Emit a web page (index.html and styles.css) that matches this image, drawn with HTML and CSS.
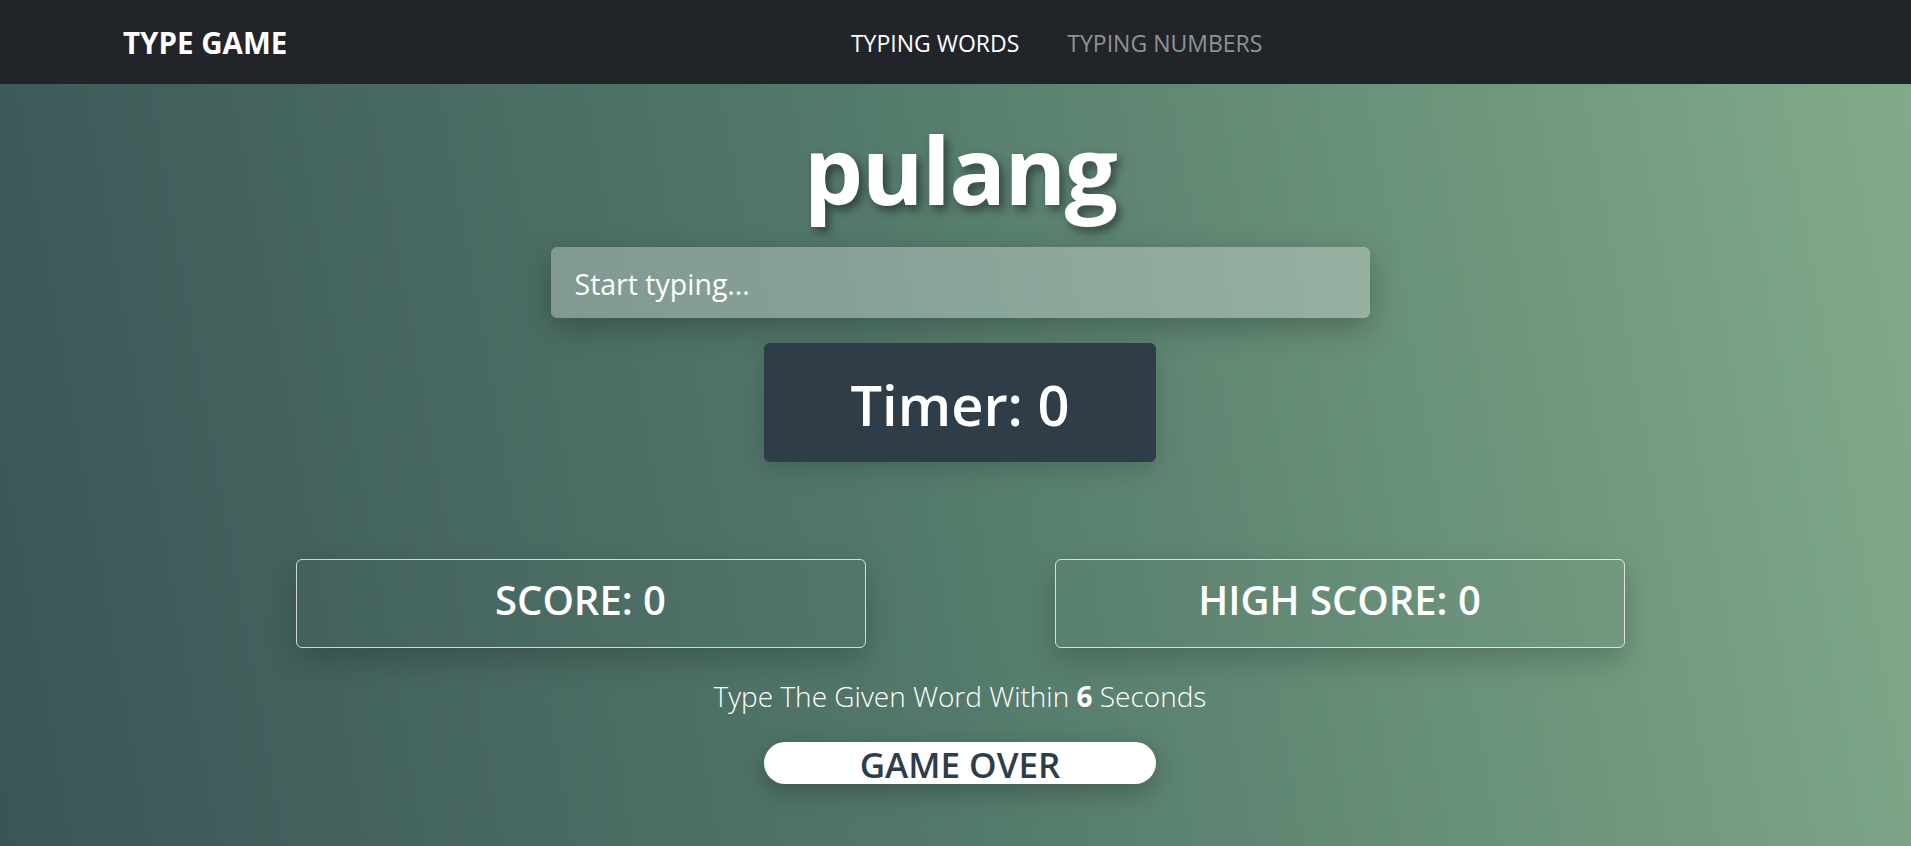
FILE: index.html
```html
<!DOCTYPE html>
<html lang="en">
<head>
<meta charset="utf-8">
<title>Type Game</title>
<link rel="stylesheet" href="styles.css">
</head>
<body>
<nav class="navbar">
  <div class="nav-container">
    <a class="brand" href="#">TYPE GAME</a>
    <ul class="nav-links">
      <li class="nav-item active"><a href="#">TYPING WORDS</a></li>
      <li class="nav-item"><a href="#">TYPING NUMBERS</a></li>
    </ul>
  </div>
</nav>
<main class="game">
  <h1 class="word">pulang</h1>
  <input class="type-input" type="text" placeholder="Start typing...">
  <div class="timer">Timer: 0</div>
  <div class="scores">
    <div class="score-box">SCORE: 0</div>
    <div class="score-box">HIGH SCORE: 0</div>
  </div>
  <p class="hint">Type The Given Word Within <strong>6</strong> Seconds</p>
  <button class="game-over" type="button">GAME OVER</button>
</main>
</body>
</html>
```
FILE: styles.css
```css
* { box-sizing: border-box; }

html, body {
  margin: 0;
  padding: 0;
}

body {
  font-family: "Open Sans", "Noto Sans", sans-serif;
  color: #fff;
  min-height: 846px;
  background: linear-gradient(80deg, #3a5556 0%, #547a6b 48%, #83ab8a 100%);
  overflow: hidden;
}

.navbar {
  background: #212529;
  height: 84px;
}

.nav-container {
  max-width: 1710px;
  margin: 0 auto;
  padding: 0 22.5px;
  height: 100%;
  display: flex;
  align-items: center;
}

.brand {
  color: #fff;
  text-decoration: none;
  font-weight: 700;
  font-size: 29.5px;
  margin-right: 24px;
}

.nav-links {
  list-style: none;
  margin: 0 auto;
  padding: 0 0 0 14px;
  display: flex;
}

.nav-item a {
  display: block;
  padding: 2px 24px 0;
  font-size: 23px;
  color: rgba(255, 255, 255, 0.5);
  text-decoration: none;
}

.nav-item.active a { color: #fff; }

.game {
  display: flex;
  flex-direction: column;
  align-items: center;
  padding-left: 9px;
}

.word {
  margin: 28px 0 0;
  font-size: 94px;
  line-height: 115px;
  font-weight: 700;
  letter-spacing: -1.5px;
  text-shadow: 4px 5px 10px rgba(0, 0, 0, 0.45);
}

.type-input {
  margin-top: 20px;
  width: 819px;
  height: 71px;
  padding: 2px 23px 0;
  font-family: inherit;
  font-size: 28.5px;
  color: #fff;
  background: rgba(255, 255, 255, 0.3);
  border: 1px solid transparent;
  border-radius: 6px;
  box-shadow: 0 10px 30px rgba(0, 0, 0, 0.25);
  outline: none;
}

.type-input::placeholder { color: #fff; opacity: 1; }

.timer {
  margin-top: 25px;
  width: 392px;
  height: 119px;
  background: #2e3d48;
  border-radius: 6px;
  display: flex;
  align-items: center;
  justify-content: center;
  padding-top: 2px;
  font-size: 56px;
  font-weight: 600;
  box-shadow: 0 8px 25px rgba(0, 0, 0, 0.15);
}

.scores {
  margin-top: 97px;
  width: 1329px;
  display: flex;
  justify-content: space-between;
}

.score-box {
  width: 570px;
  height: 89px;
  border: 1px solid rgba(255, 255, 255, 0.75);
  border-radius: 6px;
  display: flex;
  align-items: center;
  justify-content: center;
  padding-bottom: 8px;
  font-size: 40px;
  font-weight: 600;
  box-shadow: 0 12px 30px rgba(0, 0, 0, 0.2);
}

.hint {
  margin: 27px 0 0;
  font-size: 28px;
  line-height: 42px;
  font-weight: 300;
}

.hint strong { font-weight: 700; }

.game-over {
  margin-top: 25px;
  width: 392px;
  height: 42px;
  padding: 2px 0 0;
  border: none;
  border-radius: 21px;
  background: #fff;
  color: #2e3d48;
  font-family: inherit;
  font-size: 35px;
  line-height: 42px;
  font-weight: 600;
  box-shadow: 0 8px 25px rgba(0, 0, 0, 0.25);
}
```
